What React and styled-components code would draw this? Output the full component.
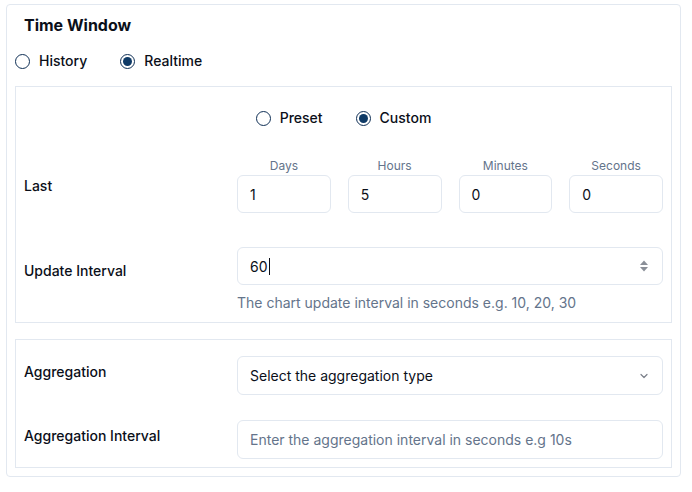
import React from "react";
import styled, { createGlobalStyle } from "styled-components";

const Global = createGlobalStyle`
  html, body { margin: 0; padding: 0; background: #ffffff; }
  body {
    font-family: Inter, "Noto Sans", "Liberation Sans", sans-serif;
    color: #0f172a;
    -webkit-font-smoothing: antialiased;
  }
  * { box-sizing: border-box; }
`;

const Page = styled.div`
  padding: 4px 11px 0 6px;
`;

const Card = styled.section`
  border: 1px solid #e2e8f0;
  border-radius: 4px;
  padding: 8px 8px 8px 8px;
  display: flex;
  flex-direction: column;
`;

const Title = styled.h2`
  margin: 0;
  padding: 2px 9px 0;
  font-size: 16px;
  line-height: 20px;
  font-weight: 700;
  color: #0b0f19;
`;

const RadioGroup = styled.div`
  display: flex;
  align-items: center;
  gap: 33px;
  margin-top: ${(p) => p.$mt || 0}px;
  justify-content: ${(p) => (p.$center ? "center" : "flex-start")};
`;

const RadioItem = styled.label`
  display: flex;
  align-items: center;
  gap: 9px;
  font-size: 14px;
  line-height: 20px;
  font-weight: 500;
  color: #0b0f19;
`;

const Circle = styled.span`
  width: 15px;
  height: 15px;
  border-radius: 50%;
  border: 1.3px solid #0f2f55;
  display: flex;
  align-items: center;
  justify-content: center;
  &::after {
    content: "";
    width: 9px;
    height: 9px;
    border-radius: 50%;
    background: ${(p) => (p.$checked ? "#0f3a66" : "transparent")};
  }
`;

const Box = styled.div`
  border: 1px solid #e2e8f0;
  margin-top: ${(p) => p.$mt}px;
  padding: ${(p) => p.$pad};
  display: flex;
  flex-direction: column;
`;

const Row = styled.div`
  display: grid;
  grid-template-columns: 213px 1fr;
  align-items: start;
  margin-top: ${(p) => p.$mt || 0}px;
`;

const Label = styled.div`
  font-size: 14px;
  line-height: 20px;
  font-weight: 500;
  color: #0b0f19;
  padding-top: ${(p) => p.$pt}px;
`;

const Units = styled.div`
  display: grid;
  grid-template-columns: repeat(4, 1fr);
  column-gap: 17px;
`;

const Unit = styled.div`
  display: flex;
  flex-direction: column;
  align-items: stretch;
  gap: 1px;
`;

const UnitLabel = styled.div`
  text-align: center;
  font-size: 12px;
  line-height: 16px;
  color: #64748b;
`;

const Field = styled.div`
  height: ${(p) => p.$h || 38}px;
  border: 1px solid #e2e8f0;
  border-radius: 6px;
  display: flex;
  align-items: center;
  padding: 0 12px;
  font-size: 14px;
  color: ${(p) => (p.$placeholder ? "#64748b" : "#0b0f19")};
  background: #fff;
`;

const Value = styled.span`
  flex: 1;
  display: flex;
  align-items: center;
`;

const Caret = styled.span`
  display: inline-block;
  width: 1px;
  height: 17px;
  background: #0b0f19;
  margin-left: 1px;
`;

const Helper = styled.div`
  margin-top: 8px;
  font-size: 14px;
  line-height: 20px;
  color: #64748b;
`;

const Spinner = () => (
  <svg width="12" height="16" viewBox="0 0 12 16">
    <path d="M6 2.5 L10 7 H2 Z" fill="#8a8f98" />
    <path d="M6 13.5 L10 9 H2 Z" fill="#8a8f98" />
  </svg>
);

const Chevron = () => (
  <svg width="12" height="12" viewBox="0 0 12 12" fill="none">
    <path d="M3 4.5 L6 7.5 L9 4.5" stroke="#7b808a" strokeWidth="1.2" strokeLinecap="round" strokeLinejoin="round" />
  </svg>
);

const Radio = ({ checked, children }) => (
  <RadioItem>
    <Circle $checked={checked} />
    {children}
  </RadioItem>
);

export default function App() {
  const units = [
    ["Days", "1"],
    ["Hours", "5"],
    ["Minutes", "0"],
    ["Seconds", "0"],
  ];
  return (
    <Page>
      <Global />
      <Card>
        <Title>Time Window</Title>
        <RadioGroup $mt={16}>
          <Radio>History</Radio>
          <Radio checked>Realtime</Radio>
        </RadioGroup>
        <Box $mt={15} $pad="21px 8px 9px 8px">
          <RadioGroup $center>
            <Radio>Preset</Radio>
            <Radio checked>Custom</Radio>
          </RadioGroup>
          <Row $mt={30}>
            <Label $pt={18}>Last</Label>
            <Units>
              {units.map(([l, v]) => (
                <Unit key={l}>
                  <UnitLabel>{l}</UnitLabel>
                  <Field>{v}</Field>
                </Unit>
              ))}
            </Units>
          </Row>
          <Row $mt={34}>
            <Label $pt={14}>Update Interval</Label>
            <div>
              <Field>
                <Value>
                  60
                  <Caret />
                </Value>
                <Spinner />
              </Field>
              <Helper>The chart update interval in seconds e.g. 10, 20, 30</Helper>
            </div>
          </Row>
        </Box>
        <Box $mt={16} $pad="16px 8px 8px 8px">
          <Row>
            <Label $pt={6}>Aggregation</Label>
            <Field $h={39}>
              <Value>Select the aggregation type</Value>
              <Chevron />
            </Field>
          </Row>
          <Row $mt={25}>
            <Label $pt={6}>Aggregation Interval</Label>
            <Field $h={39} $placeholder>
              Enter the aggregation interval in seconds e.g 10s
            </Field>
          </Row>
        </Box>
      </Card>
    </Page>
  );
}
